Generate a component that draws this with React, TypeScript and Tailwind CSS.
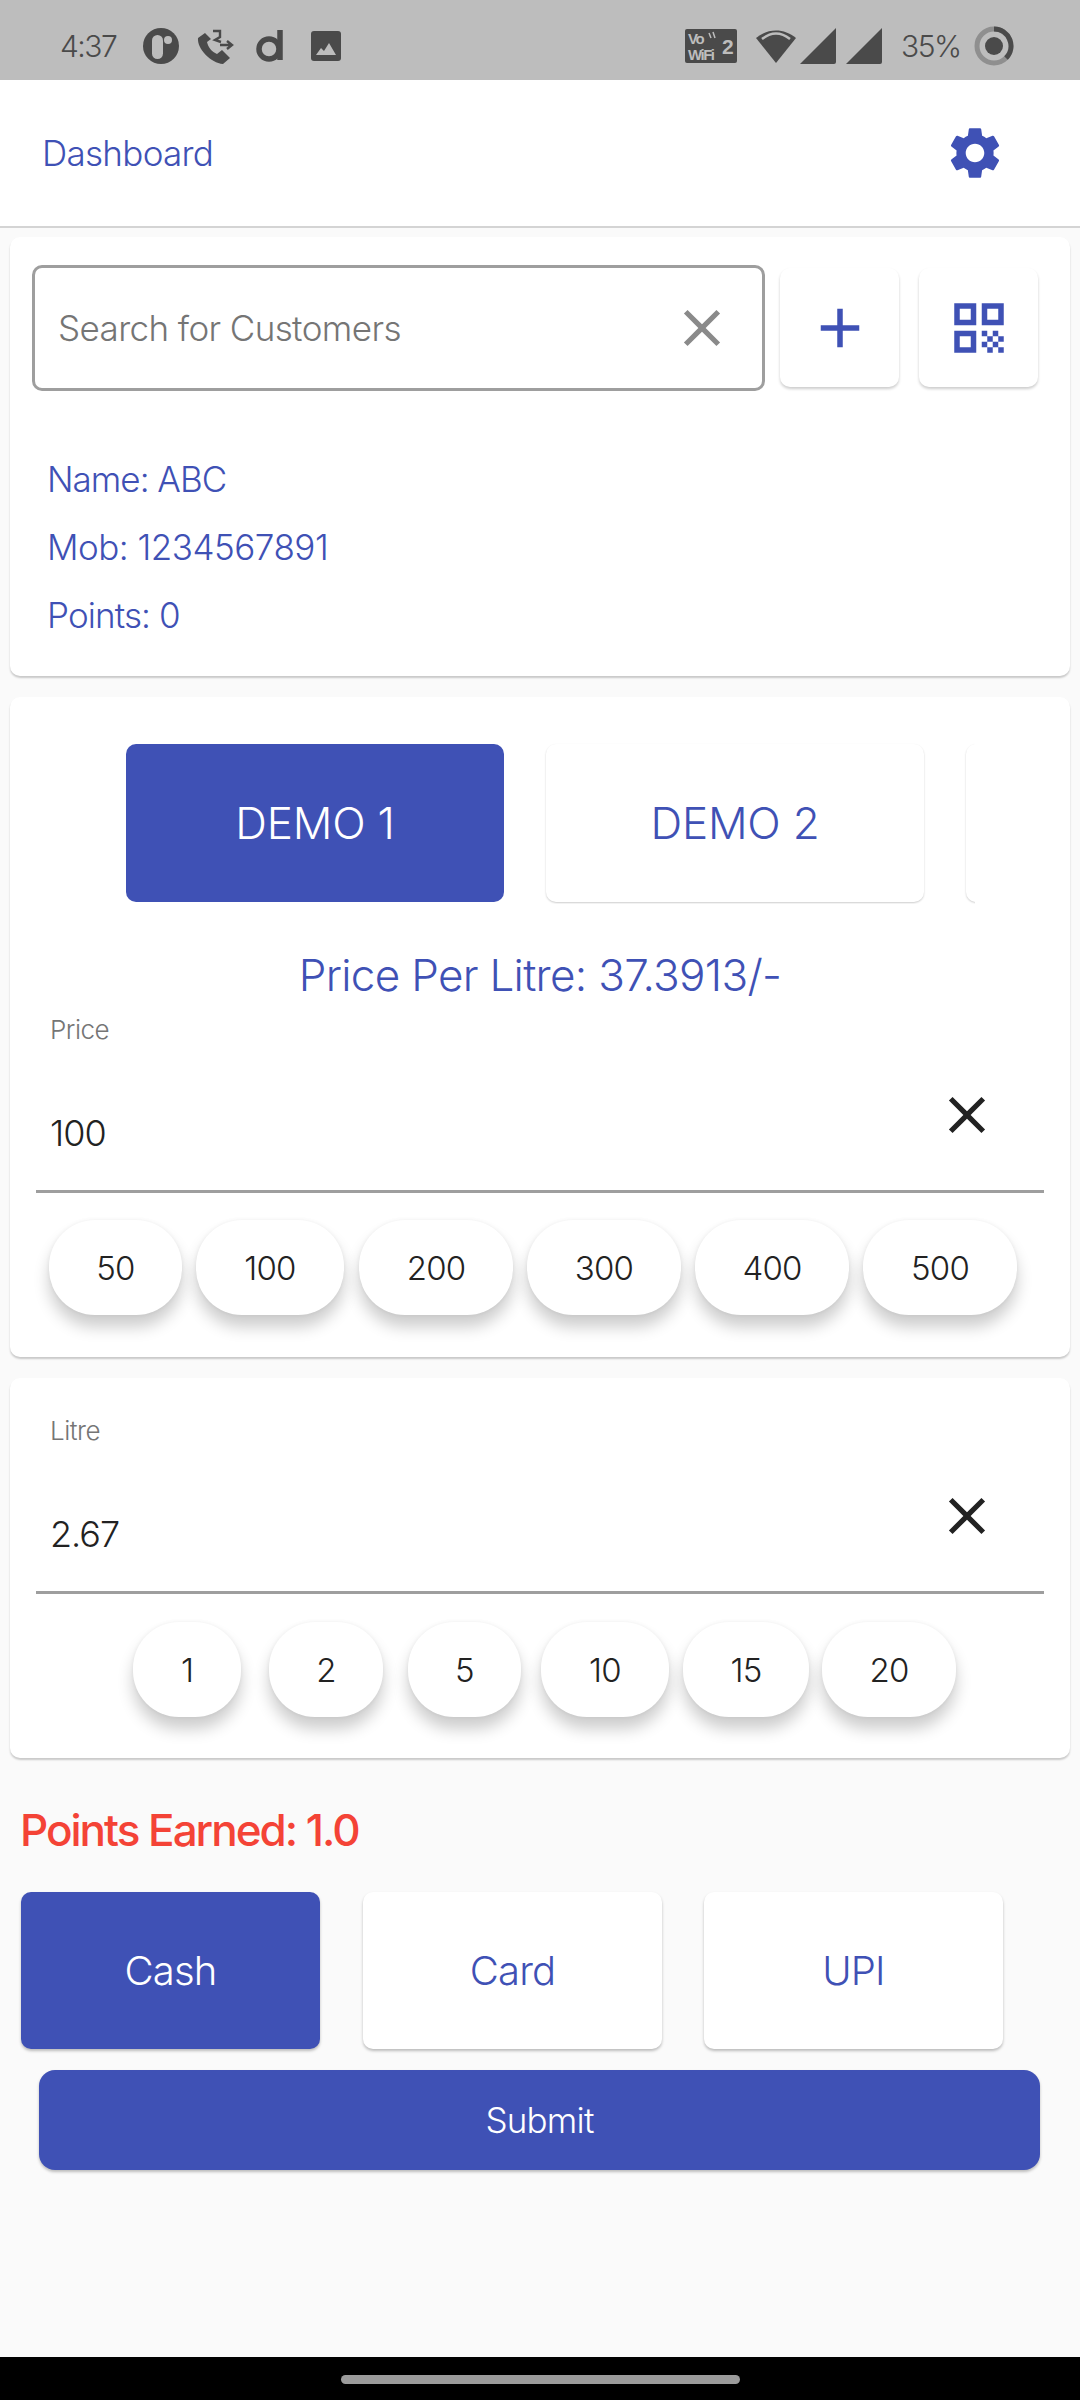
import React from "react";
import { MdAdd, MdClose, MdSettings } from "react-icons/md";

const priceChips = [
  { label: "50", className: "w-[133px]" },
  { label: "100", className: "w-[148px] ml-[14px]" },
  { label: "200", className: "w-[154px] ml-[15px]" },
  { label: "300", className: "w-[154px] ml-[14px]" },
  { label: "400", className: "w-[154px] ml-[14px]" },
  { label: "500", className: "w-[154px] ml-[14px]" },
];

const litreChips = [
  { label: "1", className: "w-[108px]" },
  { label: "2", className: "w-[114px] ml-[28px]" },
  { label: "5", className: "w-[113px] ml-[25px]" },
  { label: "10", className: "w-[128px] ml-[20px]" },
  { label: "15", className: "w-[126px] ml-[14px]" },
  { label: "20", className: "w-[134px] ml-[13px]" },
];

const QrIcon = () => (
  <svg width="66" height="66" viewBox="0 0 24 24" fill="#3f51b5">
    <path d="M3 11h8V3H3v8zm2-6h4v4H5V5zM3 21h8v-8H3v8zm2-6h4v4H5v-4zm8-12v8h8V3h-8zm6 6h-4V5h4v4zm0 10h2v2h-2zm-6-6h2v2h-2zm2 2h2v2h-2zm-2 2h2v2h-2zm2 2h2v2h-2zm2-2h2v2h-2zm0-4h2v2h-2zm2 2h2v2h-2z" />
  </svg>
);

const StatusBar = () => (
  <div className="h-[80px] pt-[12px] bg-[#bdbdbd] flex items-center text-[#4a4a4a] text-[30px] tracking-[-1.5px] font-light">
    <span className="ml-[60px] w-[61px]">4:37</span>
    <svg className="ml-[21px]" width="38" height="38" viewBox="0 0 38 38">
      <circle cx="19" cy="19" r="18" fill="#4a4a4a" />
      <rect x="10" y="8" width="11" height="24" rx="5.5" fill="#bdbdbd" />
      <circle cx="26" cy="13" r="4" fill="#bdbdbd" />
    </svg>
    <svg className="ml-[16px]" width="38" height="38" viewBox="0 0 38 38" fill="#4a4a4a">
      <path d="M9 6 L2 11 C1 22 15 36 27 37 L34 31 L26 23 L21 27 C16 25 12 20 11 15 L15 12 Z" />
      <path d="M17 4 H24 V10 L19 13 L25 15 M24 18 H35 M31 14 L36 18 L31 22" fill="none" stroke="#4a4a4a" strokeWidth="2.4" />
    </svg>
    <svg className="ml-[22px]" width="28" height="36" viewBox="0 0 28 36" fill="none" stroke="#4a4a4a" strokeWidth="5.5">
      <circle cx="13" cy="21" r="10" />
      <path d="M24 2 V32" />
    </svg>
    <svg className="ml-[27px]" width="30" height="30" viewBox="0 0 30 30">
      <rect width="30" height="30" rx="3" fill="#4a4a4a" />
      <path d="M5 24 L10 17 L13 20 L18 12 L25 24 Z" fill="#bdbdbd" />
    </svg>
    <svg className="ml-[344px]" width="52" height="34" viewBox="0 0 52 34">
      <rect width="52" height="34" rx="2" fill="#4a4a4a" />
      <text x="3" y="15" fontSize="15" fontWeight="700" fill="#bdbdbd" fontFamily="Liberation Sans">Vo</text>
      <path d="M24 4 L26 9 M28 3 L30 9" stroke="#bdbdbd" strokeWidth="1.5" />
      <text x="3" y="31" fontSize="15" fontWeight="700" fill="#bdbdbd" fontFamily="Liberation Sans">WiFi</text>
      <text x="37" y="25" fontSize="21" fontWeight="700" fill="#bdbdbd" fontFamily="Liberation Sans">2</text>
    </svg>
    <svg className="ml-[19px]" width="40" height="36" viewBox="0 0 40 36">
      <path d="M0 10 C12 0 28 0 40 10 L20 35 Z" fill="#4a4a4a" />
      <path d="M6 11 C15 4 25 4 34 11" fill="none" stroke="#bdbdbd" strokeWidth="2.5" />
    </svg>
    <svg className="ml-[4px]" width="36" height="36" viewBox="0 0 36 36" fill="#4a4a4a">
      <path d="M36 0 V34 a2 2 0 0 1 -2 2 H0 Z" />
    </svg>
    <svg className="ml-[10px]" width="36" height="36" viewBox="0 0 36 36" fill="#4a4a4a">
      <path d="M36 0 V34 a2 2 0 0 1 -2 2 H0 Z" />
    </svg>
    <span className="ml-[19px] w-[63px]">35%</span>
    <svg className="ml-[10px]" width="40" height="40" viewBox="0 0 40 40" fill="none">
      <circle cx="20" cy="20" r="17" stroke="#8f8f8f" strokeWidth="5" />
      <path d="M20 3 A17 17 0 0 1 32 32" stroke="#4a4a4a" strokeWidth="5" />
      <circle cx="20" cy="20" r="9" fill="#4a4a4a" />
    </svg>
  </div>
);

const Chips = ({ items, offset }: any) => (
  <div className={`flex ${offset}`}>
    {items.map((chip: any) => (
      <div
        key={chip.label}
        className={`${chip.className} h-[95px] pt-[3px] rounded-[46px] bg-white flex items-center justify-center text-[33px] tracking-[-0.8px] text-[#222] shadow-[0_12px_16px_rgba(0,0,0,0.2),0_0_4px_rgba(0,0,0,0.06)]`}
      >
        {chip.label}
      </div>
    ))}
  </div>
);

const Field = ({ label, value, top }: any) => (
  <div className={`mx-[26px] flex justify-between border-b-[3px] border-[#9e9e9e] ${top}`}>
    <div className="pl-[14px] pb-[37px]">
      <div className="h-[30px] leading-[30px] text-[26px] tracking-[-0.5px] text-[#757575]">{label}</div>
      <div className="mt-[68px] h-[40px] leading-[40px] text-[36px] tracking-[-1px] text-[#222]">{value}</div>
    </div>
    <MdClose size={62} color="#222" className="mr-[46px] mt-[69px]" />
  </div>
);

const App = () => {
  return (
    <div className="w-[1080px] h-[2400px] bg-[#fafafa] flex flex-col font-['Inter',sans-serif] font-light">
      <StatusBar />

      <div className="h-[148px] bg-white border-b-2 border-[#d4d4d4] flex items-center justify-between">
        <span className="ml-[42px] text-[35px] tracking-[-0.7px] text-[#3f51b5]">Dashboard</span>
        <MdSettings size={62} color="#3f51b5" className="mr-[74px]" />
      </div>

      <div className="mt-[9px] mx-[10px] h-[439px] bg-white rounded-[10px] shadow-[0_2px_2px_rgba(0,0,0,0.2)]">
        <div className="pt-[28px] pl-[22px] flex items-start">
          <div className="w-[733px] h-[126px] border-[3px] border-[#9e9e9e] rounded-[10px] flex items-center justify-between">
            <span className="ml-[23px] text-[35px] tracking-[-0.6px] text-[#757575]">Search for Customers</span>
            <MdClose size={62} color="#8a8a8a" className="mr-[29px]" />
          </div>
          <div className="ml-[15px] mt-[3px] w-[119px] h-[119px] bg-white rounded-[10px] shadow-[0_2px_3px_rgba(0,0,0,0.2)] flex items-center justify-center">
            <MdAdd size={66} color="#3f51b5" />
          </div>
          <div className="ml-[20px] mt-[3px] w-[119px] h-[119px] bg-white rounded-[10px] shadow-[0_2px_3px_rgba(0,0,0,0.2)] flex items-center justify-center">
            <QrIcon />
          </div>
        </div>
        <div className="mt-[54px] pl-[37px] text-[35px] leading-[68px] text-[#3f51b5]">
          <div className="tracking-[-1px]">Name: ABC</div>
          <div className="tracking-[-0.5px]">Mob: 1234567891</div>
          <div className="tracking-[-0.9px]">Points: 0</div>
        </div>
      </div>

      <div className="mt-[21px] mx-[10px] h-[660px] bg-white rounded-[10px] shadow-[0_2px_2px_rgba(0,0,0,0.2)]">
        <div className="pt-[47px] ml-[95px] w-[870px] overflow-hidden">
          <div className="flex pl-[21px] pb-[2px]">
            <div className="shrink-0 w-[378px] h-[158px] bg-[#3f51b5] rounded-[10px] flex items-center justify-center text-[44px] tracking-[-0.2px] text-white">
              DEMO 1
            </div>
            <div className="shrink-0 ml-[42px] w-[378px] h-[158px] bg-white rounded-[10px] shadow-[0_1px_2px_rgba(0,0,0,0.2)] flex items-center justify-center text-[44px] tracking-[-0.2px] text-[#3f51b5]">
              DEMO 2
            </div>
            <div className="shrink-0 ml-[42px] w-[378px] h-[158px] bg-white rounded-[10px] shadow-[0_1px_2px_rgba(0,0,0,0.2)]" />
          </div>
        </div>
        <div className="mt-[41px] h-[60px] leading-[60px] text-center text-[44px] tracking-[-0.7px] text-[#3f51b5]">
          Price Per Litre: 37.3913/-
        </div>
        <Field label="Price" value="100" top="pt-[10px]" />
        <Chips items={priceChips} offset="mt-[27px] ml-[39px]" />
      </div>

      <div className="mt-[21px] mx-[10px] h-[380px] bg-white rounded-[10px] shadow-[0_2px_2px_rgba(0,0,0,0.2)]">
        <Field label="Litre" value="2.67" top="pt-[38px]" />
        <Chips items={litreChips} offset="mt-[28px] ml-[123px]" />
      </div>

      <div className="mt-[42px] ml-[20px] h-[60px] leading-[60px] text-[44px] font-medium tracking-[-2px] text-[#f44336]">
        Points Earned: 1.0
      </div>

      <div className="mt-[32px] ml-[21px] flex">
        <div className="w-[299px] h-[157px] bg-[#3f51b5] rounded-[10px] shadow-[0_2px_3px_rgba(0,0,0,0.25)] flex items-center justify-center text-[40px] tracking-[-0.8px] text-white">
          Cash
        </div>
        <div className="ml-[43px] w-[299px] h-[157px] bg-white rounded-[10px] shadow-[0_2px_3px_rgba(0,0,0,0.25)] flex items-center justify-center text-[40px] tracking-[-0.8px] text-[#3f51b5]">
          Card
        </div>
        <div className="ml-[42px] w-[299px] h-[157px] bg-white rounded-[10px] shadow-[0_2px_3px_rgba(0,0,0,0.25)] flex items-center justify-center text-[40px] tracking-[-0.8px] text-[#3f51b5]">
          UPI
        </div>
      </div>

      <div className="mt-[21px] ml-[39px] w-[1001px] h-[100px] bg-[#3f51b5] rounded-[16px] shadow-[0_2px_3px_rgba(0,0,0,0.25)] flex items-center justify-center text-[35px] tracking-[-0.8px] text-white">
        Submit
      </div>

      <div className="mt-auto h-[43px] bg-black flex justify-center pt-[18px]">
        <div className="w-[399px] h-[9px] rounded-full bg-[#9b9b9b]" />
      </div>
    </div>
  );
};

export default App;
